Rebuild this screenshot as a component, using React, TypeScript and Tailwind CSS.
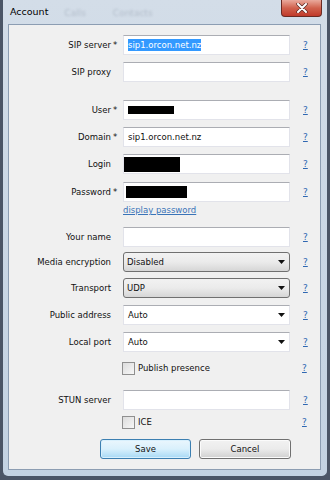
import React from "react";

const FONT = "font-['DejaVu_Sans',sans-serif]";

const Help = () => (
  <span className="ml-[13px] text-[9px] leading-none text-[#2f67b1] underline">?</span>
);

interface RowProps {
  label?: string;
  req?: boolean;
  className?: string;
  help?: boolean;
  children?: React.ReactNode;
}

const Row: React.FC<RowProps> = ({ label, req, className = "", help = true, children }) => (
  <div className={`flex items-center h-[20px] ${className}`}>
    <div className="w-[110px] shrink-0 flex justify-end items-center text-[8.5px] text-[#111]">
      <span>{label}</span>
      <span className="w-[8px] pl-[2px] text-left">{req ? "*" : ""}</span>
    </div>
    <div className="ml-[4px] w-[167px] h-full shrink-0">{children}</div>
    {help && <Help />}
  </div>
);

const TextBox: React.FC<{ children?: React.ReactNode }> = ({ children }) => (
  <div className="w-full h-full bg-white border border-[#e2e3ea] border-t-[#abadb3] flex items-center px-[4px] text-[8.5px] text-[#111]">
    {children}
  </div>
);

const Arrow = () => (
  <svg width="7" height="4" viewBox="0 0 7 4" className="ml-auto mr-[3px]">
    <path d="M0 0 H7 L3.5 4 Z" fill="#111" />
  </svg>
);

const DropList: React.FC<{ value: string }> = ({ value }) => (
  <div className="w-full h-full rounded-[3px] border border-[#707070] bg-gradient-to-b from-[#f2f2f2] via-[#ebebeb] to-[#d6d6d6] flex items-center pl-[3px] pr-[1px] text-[8.5px] text-[#111]">
    <span>{value}</span>
    <Arrow />
  </div>
);

const EditCombo: React.FC<{ value: string }> = ({ value }) => (
  <div className="w-full h-full bg-white border border-[#e2e3ea] border-t-[#abadb3] flex items-center pl-[4px] pr-[1px] text-[8.5px] text-[#111]">
    <span>{value}</span>
    <Arrow />
  </div>
);

const Check: React.FC<{ label: string; className?: string }> = ({ label, className = "" }) => (
  <div className={`flex items-center h-[14px] ${className}`}>
    <div className="w-[110px] shrink-0" />
    <div className="ml-[3px] w-[167px] flex items-center shrink-0">
      <div className="w-[13px] h-[13px] border border-[#8f8f8f] bg-gradient-to-br from-[#dcdcdc] to-[#f7f7f7]" />
      <span className="ml-[3px] text-[8.5px] text-[#111]">{label}</span>
    </div>
    <Help />
  </div>
);

export default function App() {
  return (
    <div className={`w-[330px] h-[480px] bg-[#4b5566] overflow-hidden ${FONT}`}>
      <div className="ml-[2px] w-[326px] h-[477px] rounded-b-[6px] border border-t-0 border-[#4a5566] bg-gradient-to-b from-[#d3dde8] via-[#cad7e5] to-[#c3d2e2] flex flex-col pl-[5px] pr-[6px] pb-[6px]">
        {/* title bar */}
        <div className="h-[24px] flex items-start relative">
          <span className="mt-[5px] ml-[2px] text-[9.5px] text-black">Account</span>
          <span className="mt-[7px] ml-[16px] text-[9px] text-[#b3bdca] blur-[1px]">Calls</span>
          <span className="mt-[7px] ml-[27px] text-[9px] text-[#b3bdca] blur-[1px]">Contacts</span>
          <div className="absolute right-[-1px] top-0 w-[41px] h-[17px] rounded-b-[4px] border border-t-0 border-[#6b2a22] bg-gradient-to-b from-[#e9a99c] via-[#d0614d] to-[#c0392a] flex items-center justify-center">
            <svg width="12" height="10" viewBox="0 0 12 10">
              <path d="M2 1 L10 9 M10 1 L2 9" stroke="#5a2a24" strokeWidth="3.4" strokeLinecap="round" />
              <path d="M2 1 L10 9 M10 1 L2 9" stroke="#fff" strokeWidth="2" strokeLinecap="round" />
            </svg>
          </div>
        </div>

        {/* client area */}
        <div className="flex-1 border border-[#8c9db2] bg-[#f0f0f0] pt-[10px]">
          <Row label="SIP server" req>
            <TextBox>
              <span className="bg-[#3399ff] text-white leading-[12px]">sip1.orcon.net.nz</span>
            </TextBox>
          </Row>
          <Row label="SIP proxy" className="mt-[7px]">
            <TextBox />
          </Row>
          <Row label="User" req className="mt-[18px]">
            <TextBox>
              <span className="block w-[46px] h-[8px] bg-black" />
            </TextBox>
          </Row>
          <Row label="Domain" req className="mt-[7px]">
            <TextBox>sip1.orcon.net.nz</TextBox>
          </Row>
          <Row label="Login" className="mt-[7px]">
            <div className="w-full h-full bg-white border border-[#e2e3ea] border-t-[#abadb3] flex items-center">
              <span className="block w-[56px] h-[15px] bg-black" />
            </div>
          </Row>
          <Row label="Password" req className="mt-[8px]">
            <TextBox>
              <span className="block w-[61px] h-[12px] bg-black -ml-[2px]" />
            </TextBox>
          </Row>
          <div className="flex h-[12px] mt-[2px] items-center">
            <div className="w-[114px] shrink-0" />
            <span className="text-[8.5px] leading-none text-[#3a74b8] underline">display password</span>
          </div>
          <Row label="Your name" className="mt-[11px]">
            <TextBox />
          </Row>
          <Row label="Media encryption" className="mt-[5px]">
            <DropList value="Disabled" />
          </Row>
          <Row label="Transport" className="mt-[6px]">
            <DropList value="UDP" />
          </Row>
          <Row label="Public address" className="mt-[7px]">
            <EditCombo value="Auto" />
          </Row>
          <Row label="Local port" className="mt-[7px]">
            <EditCombo value="Auto" />
          </Row>
          <Check label="Publish presence" className="mt-[9px]" />
          <Row label="STUN server" className="mt-[15px]">
            <TextBox />
          </Row>
          <Check label="ICE" className="mt-[5px]" />
          <div className="flex mt-[10px] h-[20px]">
            <div className="w-[91px] shrink-0" />
            <button className="w-[91px] h-full rounded-[3px] border border-[#3c7fb1] bg-gradient-to-b from-[#eaf6fd] via-[#d9f0fc] to-[#a7d9f5] shadow-[inset_0_0_0_1px_#d8f0fd] text-[8.5px] text-[#111]">
              Save
            </button>
            <button className="ml-[8px] w-[92px] h-full rounded-[3px] border border-[#707070] bg-gradient-to-b from-[#f2f2f2] via-[#ebebeb] to-[#d0d0d0] shadow-[inset_0_0_0_1px_#fbfbfb] text-[8.5px] text-[#111]">
              Cancel
            </button>
          </div>
        </div>
      </div>
    </div>
  );
}
